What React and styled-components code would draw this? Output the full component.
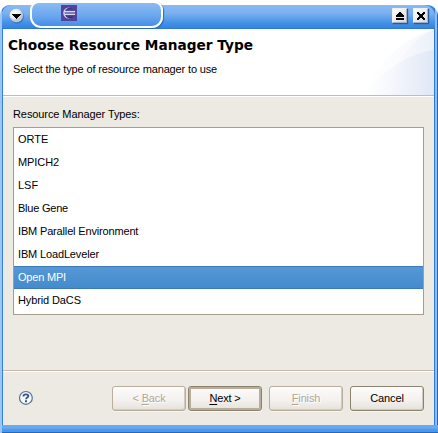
import React from "react";
import styled, { createGlobalStyle } from "styled-components";

const GlobalStyle = createGlobalStyle`
  * { box-sizing: border-box; }
  body { margin: 0; background: #fff; overflow: hidden; }
`;

const Frame = styled.div`
  width: 438px;
  height: 433px;
  padding-top: 5px;
  display: flex;
  flex-direction: column;
  font-family: "Liberation Sans", Arial, sans-serif;
  font-size: 11px;
  color: #000;
`;

const Window = styled.div`
  position: relative;
  flex: 1;
  display: flex;
  flex-direction: column;
  background: linear-gradient(90deg, #9bc5f5 0 2px, #3580dc 2px 3px, #3580dc 3px 434px, #2f7ad7 434px 435px, #8fbcf3 435px 437px, #2967b3 437px);
  border-radius: 10px 11px 0 0;
`;

const TitleBar = styled.div`
  height: 24px;
  margin: 0 3px 0 2px;
  display: flex;
  align-items: flex-start;
  background: linear-gradient(#8abaf2, #7ab0ee 35%, #4390e8 75%, #3584df 95%, #2b73c5);
  border-radius: 9px 11px 0 0;
`;

const MenuIcon = styled.svg`
  width: 18px;
  height: 18px;
  margin: 2px 0 0 5px;
  flex: none;
`;

const TitleTab = styled.div`
  width: 133px;
  height: 27px;
  margin: -4px 0 0 5px;
  padding: 2px 0 0 29px;
  border: 2px solid #fff;
  border-radius: 9px 9px 11px 11px;
  background: linear-gradient(#8bbbf2, #6ca7ee 55%, #4290e8);
  box-shadow: 1px 1px 1px #276cba;
`;

const EclipseIcon = styled.svg`
  display: block;
  width: 16px;
  height: 16px;
`;

const Controls = styled.div`
  display: flex;
  gap: 6px;
  margin: 3px 7px 0 auto;
`;

const ControlButton = styled.div`
  width: 15px;
  height: 15px;
  background: linear-gradient(135deg, #fff, #d4d8df);
  border: 1px solid #eef2f8;
  border-right-color: #aab4c4;
  border-bottom-color: #a3afc2;
  box-shadow: 1px 1px 1px #245c9e;
  svg { display: block; width: 13px; height: 13px; }
`;

const Client = styled.main`
  flex: 1;
  margin: 0 4px 0 3px;
  display: flex;
  flex-direction: column;
  background: #edeae3;
`;

const Header = styled.header`
  position: relative;
  height: 68px;
  padding: 7px 5px;
  background: #fff;
  border-bottom: 1px solid #fff;
  box-shadow: inset 0 -1px 0 #bfbdb8;
`;

const Banner = styled.svg`
  position: absolute;
  right: 0;
  top: 0;
  width: 75px;
  height: 66px;
`;

const Heading = styled.h1`
  margin: 0;
  font: bold 13.7px/18px "DejaVu Sans", sans-serif;
  letter-spacing: 0;
  white-space: nowrap;
`;

const Description = styled.p`
  margin: 8px 0 0 5px;
  line-height: 14px;
  letter-spacing: -0.15px;
`;

const Body = styled.section`
  height: 273px;
  padding: 10px 10px 0;
`;

const Label = styled.div`
  height: 20px;
  line-height: 14px;
  letter-spacing: -0.09px;
`;

const List = styled.ul`
  margin: 0;
  padding: 0;
  height: 188px;
  list-style: none;
  background: #fff;
  border: 1px solid #a69d8e;
`;

const Item = styled.li`
  height: 23px;
  padding-left: 4px;
  line-height: 23px;
  letter-spacing: ${(p) => p.$spacing || 0}px;
  color: ${(p) => (p.$selected ? "#fff" : "#000")};
  background: ${(p) => (p.$selected ? "linear-gradient(#5698d8, #448aca)" : "none")};
  box-shadow: ${(p) => (p.$selected ? "inset 0 1px #3d7ab6, inset 0 -1px #3d7ab6" : "none")};
`;

const Footer = styled.footer`
  height: 55px;
  display: flex;
  align-items: flex-start;
  padding: 15px 10px 0 15px;
  border-top: 1px solid #c5b9aa;
  box-shadow: inset 0 1px #fff;
`;

const HelpIcon = styled.svg`
  width: 15px;
  height: 15px;
  margin-top: 4px;
  flex: none;
`;

const Buttons = styled.div`
  display: flex;
  margin-left: auto;
`;

const Button = styled.button`
  width: 74px;
  height: 25px;
  margin-left: ${(p) => p.$gap || 0}px;
  padding: 0;
  font: 11px/21px "Liberation Sans", Arial, sans-serif;
  letter-spacing: -0.15px;
  color: ${(p) => (p.disabled ? "#b1a696" : "#000")};
  text-shadow: ${(p) => (p.disabled ? "1px 1px #fff" : "none")};
  background: linear-gradient(#fdfcfb, #f3f0ed 60%, #e5e1db);
  border: 1px solid ${(p) => (p.disabled ? "#b9ad9c" : "#8c8270")};
  border-radius: 3px;
  box-shadow: ${(p) =>
    p.$default
      ? "inset 0 0 0 2px #b8ac9a, 0 1px #faf9f7"
      : "inset -1px -1px #d2cabf, 0 1px #f7f5f1"};
  u { text-underline-offset: 2px; text-decoration-thickness: 1px; text-decoration-skip-ink: none; }
`;

const BottomEdge = styled.div`
  height: 8px;
  margin-left: 2px;
  background: linear-gradient(#69a9ef 0 3px, #5b9dec 4px, #4998f0 5px, #4998f0 7px, #2968b3 7px);
`;

const types = [
  ["ORTE", 0],
  ["MPICH2", -0.08],
  ["LSF", 0],
  ["Blue Gene", -0.22],
  ["IBM Parallel Environment", -0.16],
  ["IBM LoadLeveler", -0.15],
  ["Open MPI", -0.2],
  ["Hybrid DaCS", -0.12],
];

export default function App() {
  return (
    <>
      <GlobalStyle />
      <Frame>
        <Window>
          <TitleBar>
            <MenuIcon viewBox="0 0 18 18">
              <defs>
                <radialGradient id="orb" cx="40%" cy="35%">
                  <stop offset="0" stopColor="#fff" />
                  <stop offset="0.75" stopColor="#e8ebef" />
                  <stop offset="1" stopColor="#bcc6d3" />
                </radialGradient>
              </defs>
              <circle cx="10" cy="9.7" r="7" fill="#2d6fbd" opacity=".7" />
              <circle cx="9.3" cy="8.5" r="6.8" fill="url(#orb)" />
              <path d="M5 7h9v1h-1v1h-1v1h-1v1h-1v1H9v-1H8v-1H7V9H6V8H5z" fill="#000" />
            </MenuIcon>
            <TitleTab>
              <EclipseIcon viewBox="0 0 16 16">
                <defs>
                  <linearGradient id="sphere" x1="0" y1="0" x2="0" y2="1">
                    <stop offset="0" stopColor="#3b2f7c" />
                    <stop offset=".5" stopColor="#6964ae" />
                    <stop offset="1" stopColor="#2c2364" />
                  </linearGradient>
                </defs>
                <path fill="#54439d" d="M0 0h16v16H0z" />
                <circle cx="7.8" cy="8" r="5.6" fill="#d5cfe8" />
                <circle cx="9" cy="8" r="5.4" fill="url(#sphere)" />
                <path d="M3 6h11v1.200H3zM3 8.800h11V10H3z" fill="#d5d6ef" />
              </EclipseIcon>
            </TitleTab>
            <Controls>
              <ControlButton>
                <svg viewBox="0 0 13 13" shapeRendering="crispEdges">
                  <path d="M6 3h2v1h1v1h1v1h1v2H3V6h1V5h1V4h1zM3 9h8v2H3z" />
                </svg>
              </ControlButton>
              <ControlButton>
                <svg viewBox="0 0 13 13" shapeRendering="crispEdges">
                  <path d="M3 3h2v1h1v1h2V4h1V3h2v2h-1v1H9v2h1v1h1v2H9v-1H8V9H6v1H5v1H3V9h1V8h1V6H4V5H3z" />
                </svg>
              </ControlButton>
            </Controls>
          </TitleBar>
          <Client>
            <Header>
              <Banner viewBox="0 0 75 66">
                <defs>
                  <linearGradient id="sweep">
                    <stop offset="0" stopColor="#dbe3f4" stopOpacity="0" />
                    <stop offset="1" stopColor="#cbd7ef" stopOpacity=".7" />
                  </linearGradient>
                </defs>
                <path d="M4 66C16 38 42 8 75 1V66z" fill="url(#sweep)" opacity=".3" />
                <path d="M31 50C39 31 54 8 75 1V66H24z" fill="url(#sweep)" opacity=".3" />
                <path d="M4 66C22 44 45 26 75 21V66z" fill="url(#sweep)" opacity=".5" />
              </Banner>
              <Heading>Choose Resource Manager Type</Heading>
              <Description>Select the type of resource manager to use</Description>
            </Header>
            <Body>
              <Label>Resource Manager Types:</Label>
              <List>
                {types.map(([name, spacing]) => (
                  <Item key={name} $spacing={spacing} $selected={name === "Open MPI"}>{name}</Item>
                ))}
              </List>
            </Body>
            <Footer>
              <HelpIcon viewBox="0 0 15 15">
                <circle cx="7.9" cy="7.9" r="6.4" fill="#f5f8fc" stroke="#58709a" strokeWidth="1.2" />
                <path d="M5.500 6.400V5.900c0-2 4.900-2 4.900.1C10.400 7.500 8 7.500 8 9.200" fill="none" stroke="#36547f" strokeWidth="1.8" />
                <path d="M7 10.200h2v2H7z" fill="#36547f" />
              </HelpIcon>
              <Buttons>
                <Button disabled>&lt; <u>B</u>ack</Button>
                <Button $gap={2} $default><u>N</u>ext &gt;</Button>
                <Button $gap={7} disabled><u>F</u>inish</Button>
                <Button $gap={7}>Cancel</Button>
              </Buttons>
            </Footer>
          </Client>
          <BottomEdge />
        </Window>
      </Frame>
    </>
  );
}
